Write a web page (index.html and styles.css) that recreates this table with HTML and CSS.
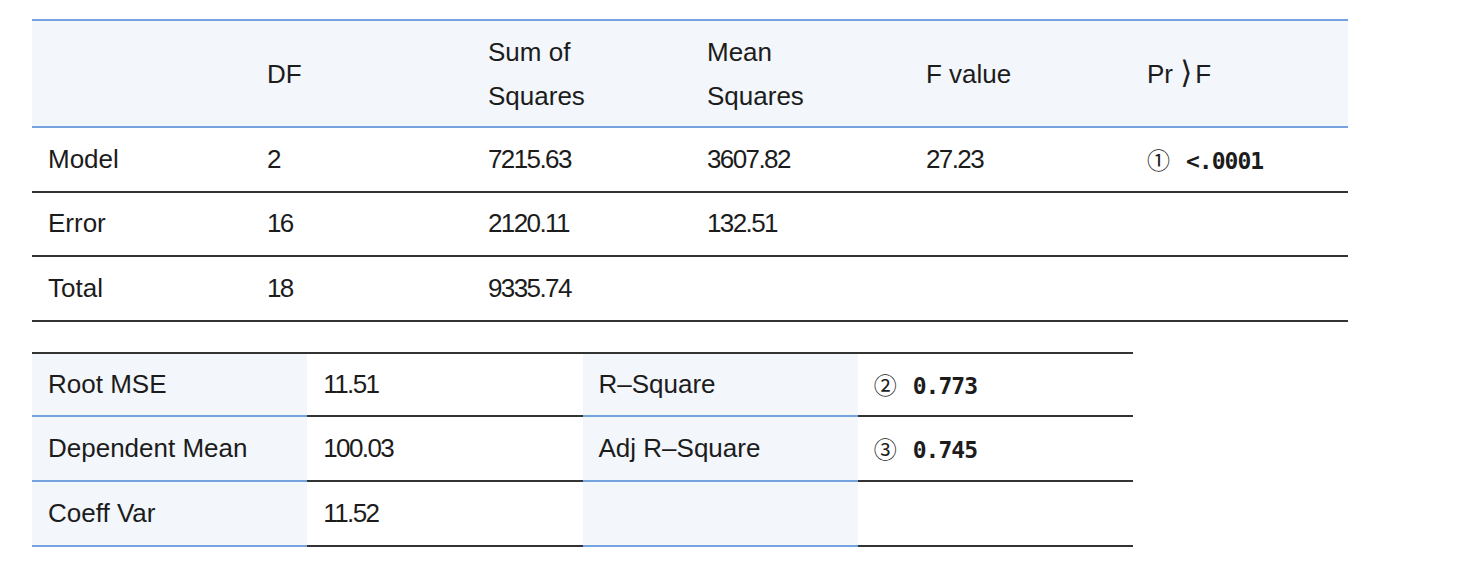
FILE: index.html
```html
<!DOCTYPE html>
<html lang="en">
<head>
  <meta charset="UTF-8" />
  <title>Analysis of Variance</title>
  <link rel="stylesheet" href="styles.css">
</head>
<body>
  <table class="anova">
    <colgroup>
      <col style="width: 219px">
      <col style="width: 221px">
      <col style="width: 219px">
      <col style="width: 219px">
      <col style="width: 221px">
      <col style="width: 217px">
    </colgroup>
    <thead>
      <tr>
        <th></th>
        <th>DF</th>
        <th>Sum of<br>Squares</th>
        <th>Mean<br>Squares</th>
        <th>F value</th>
        <th>Pr <span class="angle">&#10217;</span>F</th>
      </tr>
    </thead>
    <tbody>
      <tr>
        <td>Model</td>
        <td class="num">2</td>
        <td class="num">7215.63</td>
        <td class="num">3607.82</td>
        <td class="num">27.23</td>
        <td><span class="mark">①</span><span class="mono">&lt;.0001</span></td>
      </tr>
      <tr>
        <td>Error</td>
        <td class="num">16</td>
        <td class="num">2120.11</td>
        <td class="num">132.51</td>
        <td></td>
        <td></td>
      </tr>
      <tr>
        <td>Total</td>
        <td class="num">18</td>
        <td class="num">9335.74</td>
        <td></td>
        <td></td>
        <td></td>
      </tr>
    </tbody>
  </table>

  <table class="fit">
    <tr>
      <td class="key">Root MSE</td>
      <td class="num">11.51</td>
      <td class="key">R&#8211;Square</td>
      <td><span class="mark">②</span><span class="mono">0.773</span></td>
    </tr>
    <tr>
      <td class="key">Dependent Mean</td>
      <td class="num">100.03</td>
      <td class="key">Adj R&#8211;Square</td>
      <td><span class="mark">③</span><span class="mono">0.745</span></td>
    </tr>
    <tr>
      <td class="key">Coeff Var</td>
      <td class="num">11.52</td>
      <td class="key"></td>
      <td></td>
    </tr>
  </table>
</body>
</html>
```

FILE: styles.css
```css
:root {
  --ink: #1c1c1c;
  --rule: #333;
  --blue-rule: #74a3df;
  --blue-bg: #f3f6fb;
}
* {
  margin: 0;
  padding: 0;
  box-sizing: border-box;
}
body {
  background: #fff;
  color: var(--ink);
  font-family: 'Liberation Sans', Arial, sans-serif;
  font-size: 26px;
  padding: 19px 0 0 32px;
}
table {
  border-collapse: separate;
  border-spacing: 0;
  table-layout: fixed;
}
th, td {
  text-align: left;
  font-weight: normal;
  padding: 0 16px;
  vertical-align: middle;
  white-space: nowrap;
}
.anova {
  width: 1316px;
}
.anova th {
  background: var(--blue-bg);
  border-top: 2px solid var(--blue-rule);
  border-bottom: 2px solid var(--blue-rule);
  height: 109px;
  line-height: 44px;
}
.anova td {
  height: 64.5px;
  border-bottom: 2px solid var(--rule);
}
.angle {
  font-family: 'DejaVu Sans', sans-serif;
  font-size: 31px;
  line-height: 1;
  margin: 0 3px 0 0;
}
.num {
  letter-spacing: -1.6px;
}
.mark {
  display: inline-block;
  font-family: 'Noto Sans CJK KR', sans-serif;
  font-size: 23px;
  width: 39px;
}
.mono {
  font-family: 'DejaVu Sans Mono', monospace;
  font-weight: bold;
  font-size: 23px;
  letter-spacing: -1px;
}
.fit {
  width: 1101px;
  margin-top: 30px;
}
.fit td {
  width: 275px;
  height: 65px;
  border-bottom: 2px solid var(--rule);
}
.fit tr:first-child td {
  border-top: 2px solid var(--rule);
}
.fit td.key {
  background: var(--blue-bg);
  border-color: var(--blue-rule);
}
```
